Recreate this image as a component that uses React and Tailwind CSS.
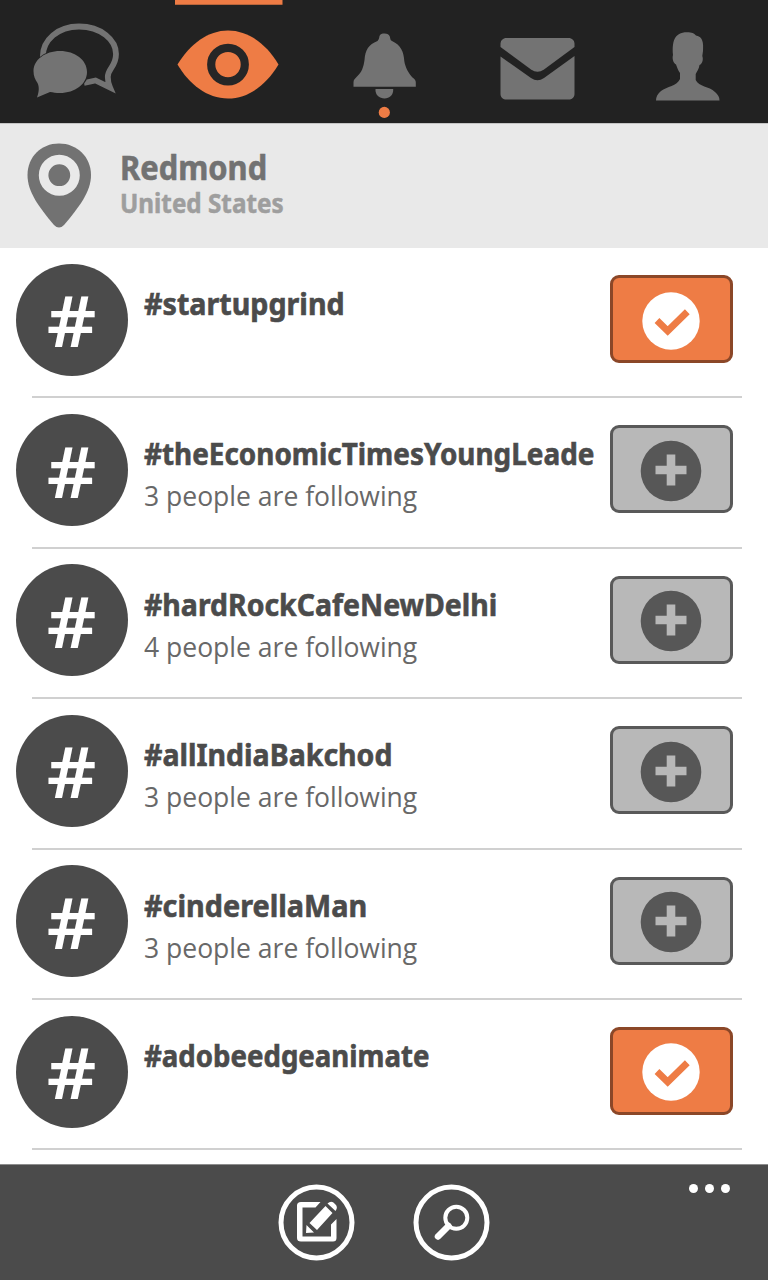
import React from "react";

const topics = [
  { tag: "#startupgrind", width: "scale-x-[0.955]", following: true },
  { tag: "#theEconomicTimesYoungLeade", width: "scale-x-[0.929]", count: 3 },
  { tag: "#hardRockCafeNewDelhi", width: "scale-x-[0.948]", count: 4 },
  { tag: "#allIndiaBakchod", width: "scale-x-[0.95]", count: 3 },
  { tag: "#cinderellaMan", width: "scale-x-[0.96]", count: 3 },
  { tag: "#adobeedgeanimate", width: "scale-x-[0.92]", following: true },
];

function TabBar() {
  return (
    <nav className="flex h-[123px] shrink-0 bg-[#222222] text-[#737373]">
      <button className="flex w-[153px] justify-center">
        <svg className="h-[123px] w-[153px]" viewBox="0 0 153 123" fill="currentColor">
          <path
            d="M42.800 57C42.500 40 58 26.500 79 26.500C101 26.500 116 40 116 54C116 67 107.800 68 107.800 77C107.800 81 108.500 84 110 87.500L95.500 80.500L84 83"
            fill="none"
            stroke="currentColor"
            strokeWidth="5.800"
          />
          <ellipse cx="60.500" cy="72" rx="27.800" ry="22.200" fill="#222222" />
          <path d="M60 51C75 51 87 60 87 72C87 84 75 93 60 93C56 93 53 92.500 50 92L37 97.500C39 92 39.500 87 37.500 83C35 79 33.500 76 33.500 71C33.500 60 45 51 60 51Z" />
        </svg>
      </button>
      <button className="flex w-[154px] flex-col items-center">
        <svg className="h-[123px] w-[154px]" viewBox="153 0 154 123">
          <path d="M175 0H282.500V4.700H175Z" fill="#ee7c45" />
          <path
            d="M177.500 64.500C190 44 208 30.500 228 30.500C249 30.500 267 45 278.500 64.500C267 84 249 98.500 228 98.500C207 98.500 189 84 177.500 64.500Z"
            fill="#ee7c45"
          />
          <circle cx="228" cy="64.600" r="16.800" fill="none" stroke="#262626" strokeWidth="8.200" />
        </svg>
      </button>
      <button className="flex w-[154px] justify-center">
        <svg className="h-[123px] w-[154px]" viewBox="307 0 154 123" fill="currentColor">
          <path d="M377.500 41C379.500 39 379 37.500 379.500 36C380.300 34 382 33.500 384.500 33.500C387.500 33.500 389 34.500 389.800 36.500C390.500 38.500 390 40 392 41C401 45 403.800 52 404.300 61C405 67 409 74 412.500 77.500C415 79.500 415.800 80.500 415.800 82.500V86.800H353.500V82.500C353.500 80 354.500 79 357 76.500C362 72 363.500 67 364.500 60C365.300 50 368.500 44.500 377.500 41Z" />
          <path d="M375.500 89H393.200C393.500 95 389.500 98.500 384.500 98.500C379.500 98.500 375 95 375.500 89Z" />
          <circle cx="384.300" cy="112.400" r="5.600" fill="#ee7c45" />
        </svg>
      </button>
      <button className="flex w-[153px] justify-center">
        <svg className="h-[123px] w-[153px]" viewBox="461 0 153 123" fill="currentColor">
          <path d="M500.500 47V44C500.500 40.500 503 38 506.500 38H568.500C572 38 574.500 40.500 574.500 44V47L544 69.500Q537.500 74 531 69.500Z" />
          <path d="M500.500 56.500L531 78Q537.500 82.500 544 78L574.500 56V94C574.500 97.500 572 99.500 568.500 99.500H506.500C503 99.500 500.500 97.500 500.500 94Z" />
        </svg>
      </button>
      <button className="flex w-[154px] justify-center">
        <svg className="h-[123px] w-[154px]" viewBox="614 0 154 123" fill="currentColor">
          <path d="M673 55C672 42 674 32.300 687 32.300C692 32.300 694 33.500 696 35.500C703 36.500 703.500 43 703 51L702.300 56C703.500 59 702.500 64 699.500 65C699 69 697 71 695.700 74V80C699 87 709 86 715 92C718 95 719.500 97 719.500 100.500H656C656 97 657.500 94 661 91C667 86.500 677 86 680 79V73C678 70.500 677 67 676 64.500C673 63 672 58 673 55Z" />
        </svg>
      </button>
    </nav>
  );
}

function LocationHeader() {
  return (
    <header className="flex h-[125px] shrink-0 items-start border-t border-[#c4c4c4] bg-[#e9e9e9] pt-[19px] pl-[27px] font-['Noto_Sans','Open_Sans',sans-serif] font-bold">
      <svg className="h-[86px] w-[64px] shrink-0" viewBox="27 143 64 86">
        <path
          d="M59 143.500C77 143.500 91 157 91 175C91 192 79 207 64 225Q59 230 54 225C39 207 27.500 192 27.500 175C27.500 157 41 143.500 59 143.500Z"
          fill="#727272"
        />
        <circle cx="59.300" cy="175.200" r="15.700" fill="#727272" stroke="#e9e9e9" strokeWidth="9.600" />
      </svg>
      <div className="ml-[29px] flex flex-col items-start pt-[5px] whitespace-nowrap">
        <h1 className="origin-left scale-x-[0.908] text-[34px] leading-[38px] text-[#727272] [-webkit-text-stroke:0.6px_#727272]">Redmond</h1>
        <h2 className="origin-left scale-x-[0.933] text-[26px] leading-[34px] text-[#9e9e9e] [-webkit-text-stroke:0.5px_#9e9e9e]">United States</h2>
      </div>
    </header>
  );
}

function FollowButton({ following }) {
  return following ? (
    <button className="mt-[27px] flex h-[88px] w-[123px] shrink-0 items-center justify-center rounded-[9px] border-[3px] border-[#8b4728] bg-[#ee7c45]">
      <svg className="mt-[3px] ml-[-2px] h-[60px] w-[60px]" viewBox="0 0 60 60">
        <circle cx="30" cy="30" r="28.700" fill="#ffffff" />
        <path d="M16 29.500L26.700 39.900L46.300 20.700" fill="none" stroke="#ee7c45" strokeWidth="6.800" strokeLinejoin="miter" />
      </svg>
    </button>
  ) : (
    <button className="mt-[27px] flex h-[88px] w-[123px] shrink-0 items-center justify-center rounded-[9px] border-[3px] border-[#595959] bg-[#b8b8b8]">
      <svg className="mt-[3px] ml-[-2px] h-[62px] w-[62px]" viewBox="0 0 62 62">
        <circle cx="31" cy="31" r="30.300" fill="#575757" />
        <path d="M15.500 30H46.500M31 14.500V45.500" fill="none" stroke="#b8b8b8" strokeWidth="8.600" />
      </svg>
    </button>
  );
}

function TopicRow({ topic }) {
  return (
    <li className="flex h-[150.4px] shrink-0 flex-col font-['Noto_Sans','Open_Sans',sans-serif]">
      <div className="flex h-[148.4px] shrink-0 items-start pl-4">
        <div className="mt-[15.7px] flex h-[112px] w-[112px] shrink-0 items-center justify-center rounded-full bg-[#4b4b4b]">
          <span className="scale-x-[1.1] pt-px text-[70px] leading-[112px] font-semibold text-white">#</span>
        </div>
        <div className="flex w-[482px] shrink-0 flex-col items-start pt-[35px] pl-4 whitespace-nowrap">
          <h3 className={"origin-left text-[30px] leading-[42px] font-bold text-[#4b4b4b] [-webkit-text-stroke:0.6px_#4b4b4b] " + topic.width}>{topic.tag}</h3>
          {topic.count && (
            <p className="origin-left scale-x-[0.982] font-['Open_Sans','Noto_Sans',sans-serif] text-[27px] leading-[42px] text-[#686868]">
              {topic.count} people are following
            </p>
          )}
        </div>
        <FollowButton following={topic.following} />
      </div>
      <div className="mr-[26px] ml-8 h-[2px] shrink-0 bg-[#d0d0d0]" />
    </li>
  );
}

function CommandBar() {
  return (
    <footer className="flex h-[116px] shrink-0 border-t border-[#8d8d8d] bg-[#4b4b4b] pt-[19px] text-white">
      <button className="ml-[278px] h-[78px] w-[78px] shrink-0">
        <svg className="h-[78px] w-[78px]" viewBox="278 1184 78 78">
          <circle cx="316.500" cy="1222.500" r="35.500" fill="none" stroke="white" strokeWidth="5" />
          <path d="M320.500 1202H301Q297 1202 297 1205.500V1238Q297 1241.500 301 1241.500H333Q336.500 1241.500 336.500 1238V1219L331 1224.500V1236.500H302.500V1207.500H315.500Z" fill="white" />
          <path d="M325.500 1206L332.500 1213L317 1230L309.500 1223ZM327.500 1203.500Q331.500 1200 335 1204Q338.500 1207 335.500 1211ZM306.500 1225L314 1232.500L306 1233Z" fill="white" />
        </svg>
      </button>
      <button className="ml-[57px] h-[78px] w-[78px] shrink-0">
        <svg className="h-[78px] w-[78px]" viewBox="413 1184 78 78" fill="none" stroke="white">
          <circle cx="451.500" cy="1222.500" r="35.500" strokeWidth="5" />
          <circle cx="456.300" cy="1217.800" r="11" strokeWidth="4" />
          <path d="M448.500 1226L438 1236.500" strokeWidth="6.500" strokeLinecap="round" />
        </svg>
      </button>
      <button className="ml-[198px] flex h-[10px] gap-[7px]">
        <span className="h-[9px] w-[9px] rounded-full bg-white" />
        <span className="h-[9px] w-[9px] rounded-full bg-white" />
        <span className="h-[9px] w-[9px] rounded-full bg-white" />
      </button>
    </footer>
  );
}

export default function App() {
  return (
    <div className="flex h-[1280px] w-[768px] flex-col overflow-hidden bg-white">
      <TabBar />
      <LocationHeader />
      <ul className="flex min-h-0 flex-1 flex-col overflow-hidden">
        {topics.map((topic) => (
          <TopicRow key={topic.tag} topic={topic} />
        ))}
      </ul>
      <CommandBar />
    </div>
  );
}
